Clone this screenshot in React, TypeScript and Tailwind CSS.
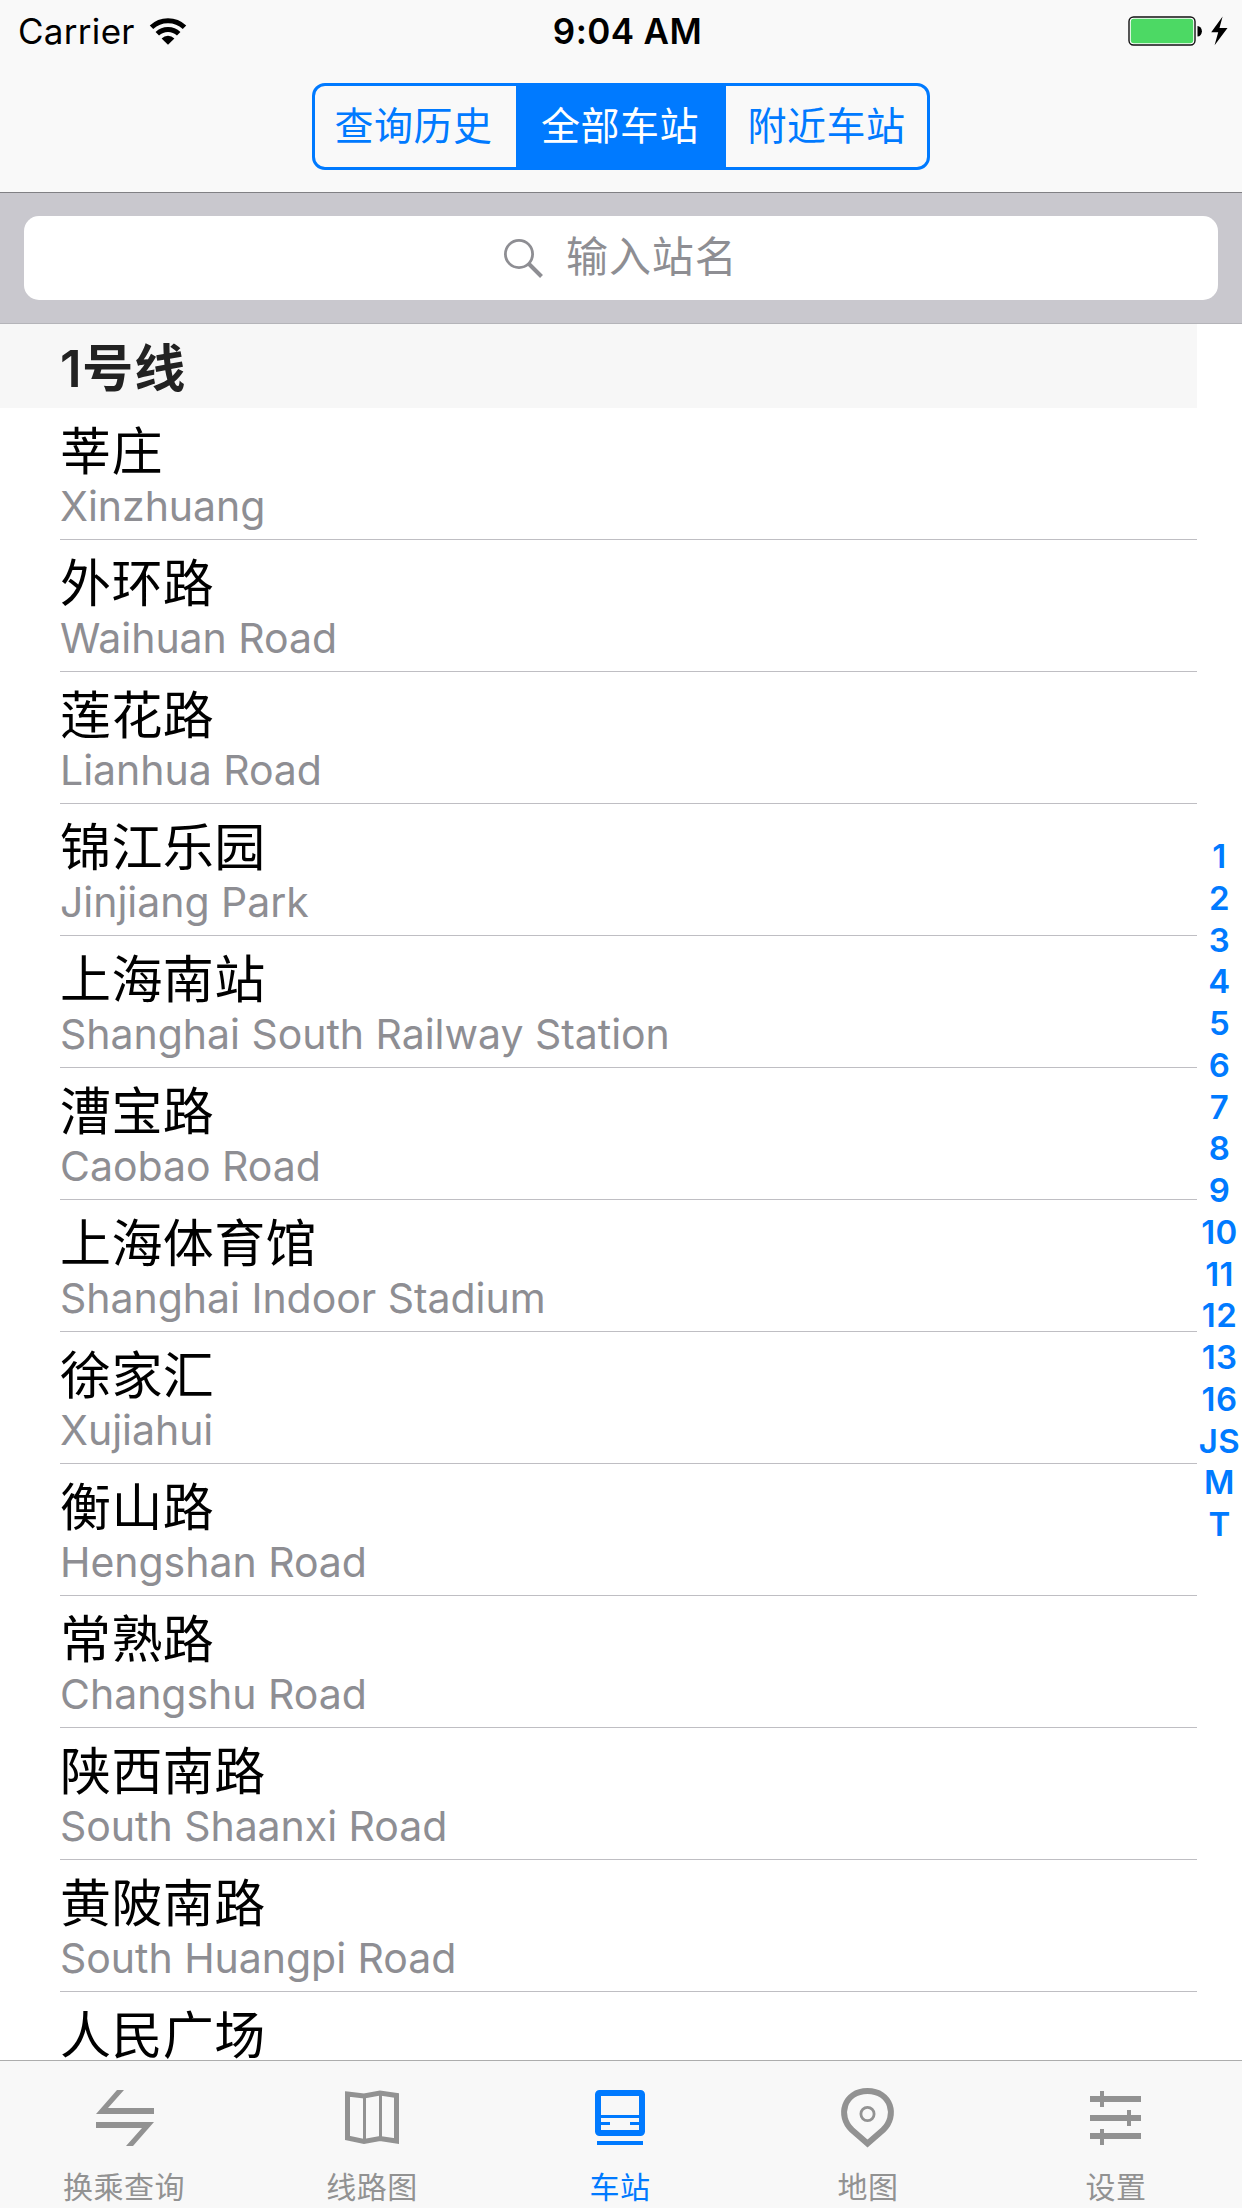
import type { ReactNode } from "react";

const stations = [
  ["莘庄", "Xinzhuang"],
  ["外环路", "Waihuan Road"],
  ["莲花路", "Lianhua Road"],
  ["锦江乐园", "Jinjiang Park"],
  ["上海南站", "Shanghai South Railway Station"],
  ["漕宝路", "Caobao Road"],
  ["上海体育馆", "Shanghai Indoor Stadium"],
  ["徐家汇", "Xujiahui"],
  ["衡山路", "Hengshan Road"],
  ["常熟路", "Changshu Road"],
  ["陕西南路", "South Shaanxi Road"],
  ["黄陂南路", "South Huangpi Road"],
];

const sections = ["1", "2", "3", "4", "5", "6", "7", "8", "9", "10", "11", "12", "13", "16", "JS", "M", "T"];

function StatusBar() {
  return (
    <div className="grid h-[60px] grid-cols-3 items-center pr-[12px] pl-[18px]">
      <div className="flex items-center">
        <span className="text-[35px] leading-[62px] tracking-[0.3px]">Carrier</span>
        <svg className="ml-[14px] h-[28px] w-[38px]" viewBox="0 0 38 28" fill="none">
          <path d="M2.500 10.200a24 24 0 0 1 33 0" stroke="#000" strokeWidth="5" />
          <path d="M8.300 16.800a15.500 15.500 0 0 1 21.400 0" stroke="#000" strokeWidth="5" />
          <path d="M12.600 21.400a9.200 9.200 0 0 1 12.800 0L19 27.800z" fill="#000" />
        </svg>
      </div>
      <div className="pl-[7px] text-center text-[35px] leading-[62px] font-semibold tracking-[0.4px]">9:04 AM</div>
      <div className="flex items-center justify-end">
        <svg className="h-[30px] w-[102px]" viewBox="0 0 102 30">
          <rect x="1" y="1" width="66" height="28" rx="4.5" fill="#fff" stroke="#111" strokeWidth="1.4" />
          <rect x="2.800" y="2.800" width="62.400" height="24.400" rx="3" fill="#4cd964" />
          <path d="M69.500 10a4.400 5.200 0 0 1 0 10.400z" fill="#000" />
          <path d="M94.600.4 83.200 16.200h7L86.600 29.200 99.500 12h-8z" fill="#000" />
        </svg>
      </div>
    </div>
  );
}

function Segments() {
  return (
    <div className="mx-auto mt-[23px] grid h-[87px] w-[618px] grid-cols-[201px_210px_201px] overflow-hidden rounded-[13px] border-3 border-[#007aff] text-center text-[39px] leading-[80px] tracking-[0.5px] text-[#007aff]">
      <span className="pr-[4px]">查询历史</span>
      <span className="bg-[#007aff] pr-[2px] text-white">全部车站</span>
      <span>附近车站</span>
    </div>
  );
}

function SearchBar() {
  return (
    <div className="h-[132px] border-t border-b border-t-[#808084] border-b-[#b4b4b9] bg-[#c9c8ce] px-[24px] pt-[23px]">
      <div className="flex h-[84px] items-center rounded-[15px] bg-white pl-[480px]">
        <svg className="h-[39px] w-[39px]" viewBox="0 0 39 39" fill="none" stroke="#8e8e93">
          <circle cx="15" cy="15" r="13.600" strokeWidth="2.8" />
          <path d="M24.500 24.500 37.500 37.500" strokeWidth="4" />
        </svg>
        <span className="ml-[23px] h-[84px] text-[42px] leading-[81px] tracking-[0.9px] text-[#8e8e93]">输入站名</span>
      </div>
    </div>
  );
}

function StationName({ name }: { name: string }) {
  return <div className="h-[58px] text-[51px] leading-[58px] tracking-[0.4px] text-black">{name}</div>;
}

function Station({ name, latin }: { name: string; latin: string }) {
  return (
    <div className="ml-[60px] h-[132px] shrink-0 border-b border-[#bfbec3] pt-[15px]">
      <StationName name={name} />
      <div className="h-[50px] text-[41px] leading-[50px] tracking-[-0.03px] whitespace-nowrap text-[#8e8e93]">{latin}</div>
    </div>
  );
}

function Tab({ label, active, children }: { label: string; active?: boolean; children: ReactNode }) {
  return (
    <div className={active ? "flex flex-col items-center text-[#007aff]" : "flex flex-col items-center text-[#929292]"}>
      <svg className="mt-[24px] h-[66px] w-[66px]" viewBox="0 0 66 66" fill="none" stroke="currentColor">
        {children}
      </svg>
      <span className="mt-[16px] text-[30px] leading-[40px] tracking-[0.5px]">{label}</span>
    </div>
  );
}

function TabBar() {
  return (
    <div className="grid h-[148px] shrink-0 grid-cols-5 border-t border-[#adadad] bg-[#f8f8f8] pr-[2px]">
      <Tab label="换乘查询">
        <path d="M26 5h7L17 23h46v6H5zM5 37h58L42 61h-7l16-18H5z" fill="currentColor" stroke="none" />
      </Tab>
      <Tab label="线路图">
        <path d="M8.500 9 25 11l16-3 16.500 2.500V56L41 53.500 25 56.500 8.500 53z" strokeWidth="5" />
        <path d="M25.500 10v47M41.500 8v46" strokeWidth="3" />
      </Tab>
      <Tab label="车站" active>
        <rect x="11" y="8" width="44" height="40" rx="1.5" strokeWidth="6" />
        <path d="M13 31.500h40M13 38.500h10M43 38.500h10" strokeWidth="3" />
        <path d="M10 58h46" strokeWidth="4" />
      </Tab>
      <Tab label="地图">
        <path d="M32.500 58.500 17 45C2 31 9 6 32.500 6S63 31 48 45z" strokeWidth="6" />
        <circle cx="32.500" cy="29" r="6.600" strokeWidth="2.8" />
      </Tab>
      <Tab label="设置">
        <path d="M7 14h51M7 33h51M7 51h51" strokeWidth="6" />
        <path d="M19 6v16M46 25v16M19 44v16" strokeWidth="4" />
      </Tab>
    </div>
  );
}

export default function App() {
  return (
    <div className="flex h-[2208px] w-[1242px] flex-col overflow-hidden bg-white font-['Inter','Noto_Sans_CJK_SC',sans-serif] text-black" lang="zh-CN">
      <header className="h-[192px] shrink-0 bg-[#f9f9f9]">
        <StatusBar />
        <Segments />
      </header>
      <SearchBar />
      <main className="flex h-[1736px] shrink-0">
        <div className="flex w-[1197px] flex-col">
          <h2 className="h-[84px] shrink-0 bg-[#f7f7f7] pl-[60px] text-[51px] leading-[89px] font-semibold tracking-[0.8px] text-[#222]">1号线</h2>
          {stations.map(([name, latin]) => (
            <Station key={name} name={name} latin={latin} />
          ))}
          <div className="ml-[60px] pt-[15px]">
            <StationName name="人民广场" />
          </div>
        </div>
        <nav className="flex w-[45px] flex-col items-center pt-[512px] text-[33px] font-semibold tracking-[0.4px] text-[#007aff]">
          {sections.map((s) => (
            <span key={s} className="h-[41.75px] shrink-0 leading-[41.75px]">{s}</span>
          ))}
        </nav>
      </main>
      <TabBar />
    </div>
  );
}
